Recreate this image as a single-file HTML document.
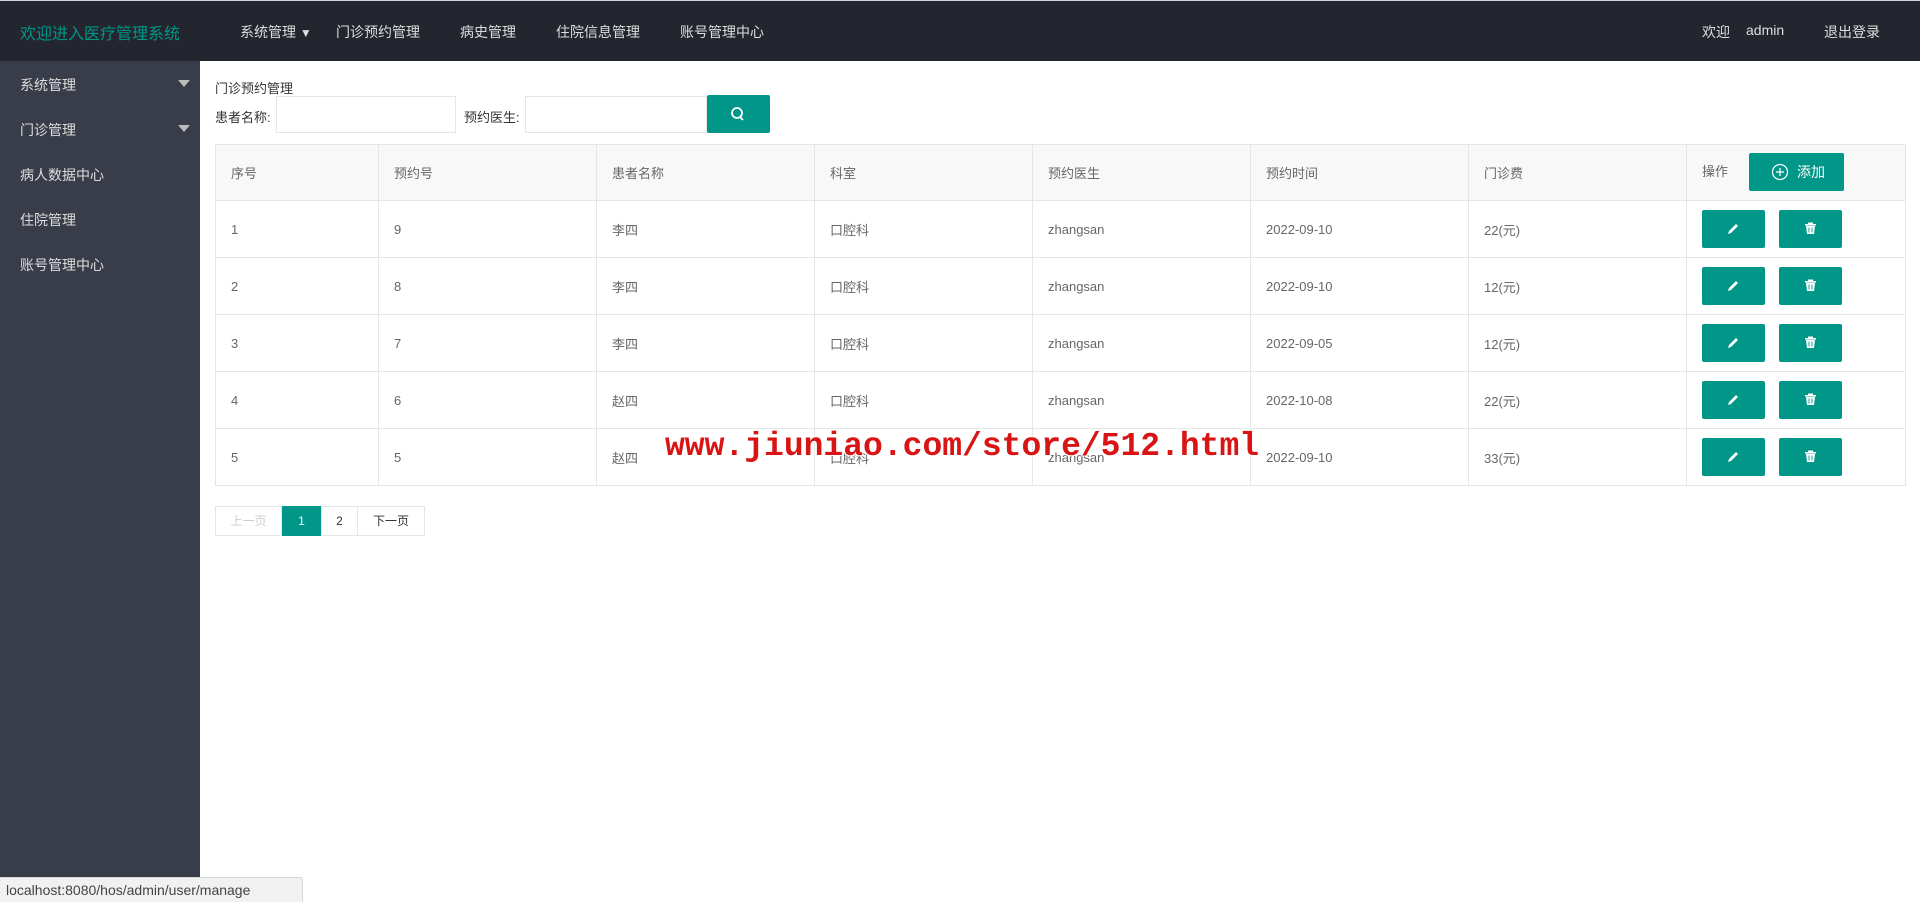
<!DOCTYPE html>
<html><head><meta charset="utf-8"><style>
*{margin:0;padding:0;box-sizing:border-box}
body{width:1920px;height:902px;overflow:hidden;background:#fff;font-family:"Liberation Sans","Noto Sans CJK SC",sans-serif;font-size:14px;color:#333;position:relative}
.hd{position:absolute;left:0;top:0;width:1920px;height:61px;background:#23262e;border-top:1px solid #cfd3d8}
.hd span{position:absolute;top:21px;color:#ddd;font-size:14px;white-space:nowrap}
.logo{left:20px!important;top:19px!important;color:#009688!important;font-size:16px!important}
.sd{position:absolute;left:0;top:61px;width:200px;height:841px;background:#393d49}
.sd div{position:absolute;left:20px;color:#ddd;font-size:14px}
.arr{position:absolute;left:178px;width:0;height:0;border-left:6px solid transparent;border-right:6px solid transparent;border-top:7px solid #bbb}
.t{position:absolute;font-size:13px;color:#333;white-space:nowrap}
.inp{position:absolute;top:96px;height:37px;border:1px solid #e6e6e6;background:#fff}
.btn{position:absolute;background:#009688;border-radius:2px}
table{position:absolute;left:215px;top:144px;border-collapse:collapse;width:1690px;table-layout:fixed}
td{border:1px solid #e6e6e6;height:57px;padding:0 15px;color:#666;font-size:13px;white-space:nowrap;overflow:hidden}
tr:first-child td{background:#f8f8f8;height:56px}
.pg{position:absolute;top:506px;height:30px;border:1px solid #e6e6e6;font-size:12px;color:#333;text-align:center;line-height:28px}
</style></head><body>
<div class="hd">
<span class="logo">欢迎进入医疗管理系统</span>
<span style="left:240px">系统管理 <small style="font-size:12px">▼</small></span>
<span style="left:336px">门诊预约管理</span>
<span style="left:460px">病史管理</span>
<span style="left:556px">住院信息管理</span>
<span style="left:680px">账号管理中心</span>
<span style="left:1702px">欢迎</span>
<span style="left:1746px">admin</span>
<span style="left:1824px">退出登录</span>
</div>
<div class="sd">
<div style="top:14px">系统管理</div><span class="arr" style="top:19px"></span>
<div style="top:59px">门诊管理</div><span class="arr" style="top:64px"></span>
<div style="top:104px">病人数据中心</div>
<div style="top:149px">住院管理</div>
<div style="top:194px">账号管理中心</div>
</div>
<div class="t" style="left:215px;top:78px">门诊预约管理</div>
<div class="t" style="left:215px;top:107px">患者名称:</div>
<div class="inp" style="left:276px;width:180px"></div>
<div class="t" style="left:464px;top:107px">预约医生:</div>
<div class="inp" style="left:525px;width:182px"></div>
<div class="btn" style="left:707px;top:95px;width:63px;height:38px"><svg width="63" height="38"><circle cx="30" cy="18" r="5" fill="none" stroke="#fff" stroke-width="1.8"/><line x1="33" y1="22" x2="36" y2="25" stroke="#fff" stroke-width="1.8"/></svg></div>
<table>
<colgroup><col style="width:163px"><col style="width:218px"><col style="width:218px"><col style="width:218px"><col style="width:218px"><col style="width:218px"><col style="width:218px"><col style="width:219px"></colgroup>
<tr><td>序号</td><td>预约号</td><td>患者名称</td><td>科室</td><td>预约医生</td><td>预约时间</td><td>门诊费</td><td style="vertical-align:middle"><span style="position:relative;top:-2px">操作</span></td></tr>
<tr><td>1</td><td>9</td><td>李四</td><td>口腔科</td><td>zhangsan</td><td>2022-09-10</td><td>22(元)</td><td></td></tr>
<tr><td>2</td><td>8</td><td>李四</td><td>口腔科</td><td>zhangsan</td><td>2022-09-10</td><td>12(元)</td><td></td></tr>
<tr><td>3</td><td>7</td><td>李四</td><td>口腔科</td><td>zhangsan</td><td>2022-09-05</td><td>12(元)</td><td></td></tr>
<tr><td>4</td><td>6</td><td>赵四</td><td>口腔科</td><td>zhangsan</td><td>2022-10-08</td><td>22(元)</td><td></td></tr>
<tr><td>5</td><td>5</td><td>赵四</td><td>口腔科</td><td>zhangsan</td><td>2022-09-10</td><td>33(元)</td><td></td></tr>
</table>
<div class="btn" style="left:1749px;top:153px;width:95px;height:38px;color:#fff;font-size:14px;line-height:38px"><svg width="18" height="18" style="position:absolute;left:22px;top:10px"><circle cx="9" cy="9" r="7.5" fill="none" stroke="#fff" stroke-width="1.2"/><path d="M9 5v8M5 9h8" stroke="#fff" stroke-width="1.2"/></svg><span style="position:absolute;left:48px">添加</span></div>
<div id="ops"></div>
<script>
var h='';for(var i=0;i<5;i++){var y=210+i*57;
h+='<div class="btn" style="left:1702px;top:'+y+'px;width:63px;height:38px"><svg width="63" height="38"><path d="M26 24l1-3 7-7 2 2-7 7z" fill="#fff"/></svg></div>';
h+='<div class="btn" style="left:1779px;top:'+y+'px;width:63px;height:38px"><svg width="63" height="38"><rect x="26" y="14" width="11" height="1.6" fill="#fff"/><rect x="29" y="12.5" width="5" height="1.5" fill="#fff"/><path d="M27 16h9l-1 8h-7z" fill="#fff"/><path d="M30 17.5v5M33 17.5v5" stroke="#009688" stroke-width="0.9"/></svg></div>';}
document.getElementById('ops').innerHTML=h;
</script>
<div class="pg" style="left:215px;width:67px;color:#ccc">上一页</div>
<div class="pg" style="left:282px;width:39px;background:#009688;border-color:#009688;color:#fff">1</div>
<div class="pg" style="left:321px;width:37px">2</div>
<div class="pg" style="left:357px;width:68px">下一页</div>
<div style="position:absolute;left:665px;top:428px;font-family:'Liberation Mono',monospace;font-weight:bold;font-size:33px;color:#d81414;white-space:nowrap;text-shadow:1px 1px 0 #fff,-1px -1px 0 #fff,1px -1px 0 #fff,-1px 1px 0 #fff">www.jiuniao.com/store/512.html</div>
<div style="position:absolute;left:0;top:877px;width:303px;height:25px;background:#f1f1f1;border:1px solid #d6d6d6;border-left:0;border-bottom:0;border-radius:0 3px 0 0;font-size:14px;color:#444;line-height:24px;padding-left:6px">localhost:8080/hos/admin/user/manage</div>
</body></html>
